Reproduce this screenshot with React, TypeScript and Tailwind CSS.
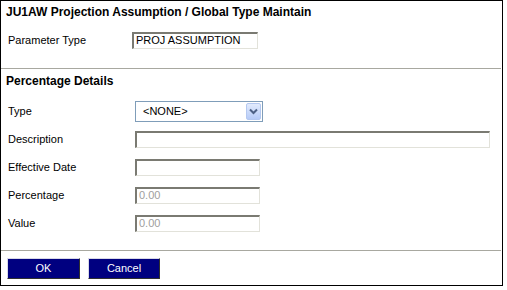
const fieldBorder =
  "border-t-2 border-l-2 border-r border-b border-t-[#7a7a72] border-l-[#7a7a72] border-r-[#e2e2da] border-b-[#e2e2da] bg-white";

function Row({ label, children }: { label: string; children: React.ReactNode }) {
  return (
    <div className="flex h-[28px] items-center">
      <div className="w-[134px] pl-[7px] text-[11px] text-black">{label}</div>
      {children}
    </div>
  );
}

function TextField({ width, value, disabled }: { width: string; value?: string; disabled?: boolean }) {
  return (
    <div
      className={`${fieldBorder} ${width} flex h-[17px] items-center pl-[2px] text-[11px] ${
        disabled ? "text-[#a0a0a0]" : "text-black"
      }`}
    >
      {value}
    </div>
  );
}

function NavyButton({ label }: { label: string }) {
  return (
    <button className="flex h-[21px] w-full items-center justify-center border border-t-[#d8d8e8] border-l-[#d8d8e8] border-r-[#303030] border-b-[#303030] bg-[#000080] text-[11px] text-white">
      {label}
    </button>
  );
}

export default function App() {
  return (
    <div className="h-[290px] w-[507px] bg-white" style={{ fontFamily: '"Liberation Sans", Arial, sans-serif' }}>
      <div className="flex h-[286px] w-[503px] flex-col border border-black">
        {/* title */}
        <div className="flex h-[21px] items-center pl-[5px] text-[12px] font-bold text-black">
          JU1AW Projection Assumption / Global Type Maintain
        </div>

        {/* parameter type */}
        <div className="mt-[4px] flex h-[28px] items-center">
          <div className="w-[131px] pl-[7px] text-[11px] text-black">Parameter Type</div>
          <TextField width="w-[126px]" value="PROJ ASSUMPTION" />
        </div>

        <div className="mt-[14px] mr-[1px] border-t border-t-[#a8a8a0]" />

        <div className="flex h-[24px] items-center pl-[5px] text-[12px] font-bold text-black">
          Percentage Details
        </div>

        {/* fields */}
        <div className="mt-[4px] flex flex-col">
          <Row label="Type">
            <div className="flex h-[21px] w-[128px] items-center border border-[#7f9db9] bg-white">
              <span className="flex-1 pl-[7px] text-[11px] text-black">&lt;NONE&gt;</span>
              <div className="mr-[1px] flex h-[17px] w-[15px] items-center justify-center rounded-[2px] border border-[#b4c8f0] bg-gradient-to-b from-[#e2ebfd] to-[#b6cbf7]">
                <svg width="9" height="7" viewBox="0 0 9 7">
                  <path d="M1 1.5 L4.5 5 L8 1.5" fill="none" stroke="#4d6185" strokeWidth="2" />
                </svg>
              </div>
            </div>
          </Row>
          <Row label="Description">
            <TextField width="w-[355px]" />
          </Row>
          <Row label="Effective Date">
            <TextField width="w-[125px]" />
          </Row>
          <Row label="Percentage">
            <TextField width="w-[125px]" value="0.00" disabled />
          </Row>
          <Row label="Value">
            <TextField width="w-[125px]" value="0.00" disabled />
          </Row>
        </div>

        <div className="mt-[13px] mr-[1px] border-t border-t-[#a8a8a0]" />

        {/* buttons */}
        <div className="mt-[7px] flex gap-[8px] pl-[6px]">
          <div className="w-[73px]">
            <NavyButton label="OK" />
          </div>
          <div className="w-[72px]">
            <NavyButton label="Cancel" />
          </div>
        </div>
      </div>
    </div>
  );
}
